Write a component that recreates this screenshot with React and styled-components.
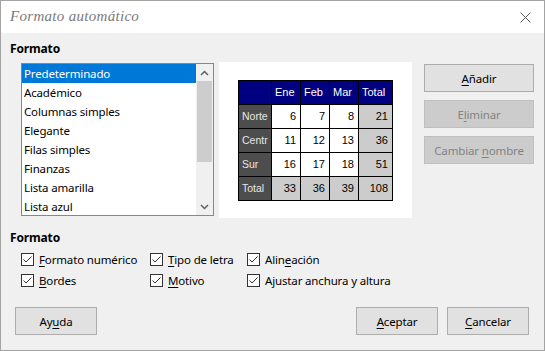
import React from "react";
import styled, { createGlobalStyle } from "styled-components";

const Global = createGlobalStyle`
  html, body { margin: 0; padding: 0; background: #f0f0f0; }
  body { font-family: "Noto Sans", "Liberation Sans", sans-serif; font-size: 11.5px; letter-spacing: -0.15px; color: #000; }
  * { box-sizing: border-box; }
`;

const Window = styled.div`
  width: 545px;
  height: 351px;
  border: 1px solid #a3a3a3;
  background: #f0f0f0;
  display: flex;
  flex-direction: column;
  overflow: hidden;
`;

const TitleBar = styled.div`
  height: 32px;
  background: #ffffff;
  display: flex;
  align-items: center;
  justify-content: space-between;
  padding: 0 13px 0 9px;
  flex-shrink: 0;
`;

const Title = styled.div`
  font-family: "Liberation Serif", "DejaVu Serif", serif;
  font-style: italic;
  font-size: 15px;
  color: #7a7a7a;
  letter-spacing: 0.3px;
  margin-top: -2px;
`;

const Body = styled.div`
  flex: 1;
  display: flex;
  flex-direction: column;
  padding: 8px 10px 0 9px;
`;

const SectionLabel = styled.div`
  font-weight: 700;
  font-size: 12px;
  line-height: 16px;
`;

const TopRow = styled.div`
  display: flex;
  align-items: flex-start;
  margin-top: 5px;
  padding-left: 11px;
`;

const ListBox = styled.div`
  width: 193px;
  height: 153px;
  margin-top: 1px;
  border: 1px solid #828790;
  background: #fff;
  display: flex;
  overflow: hidden;
`;

const Items = styled.div`
  flex: 1;
  overflow: hidden;
`;

const Item = styled.div`
  height: 19px;
  line-height: 19px;
  padding-left: 2px;
  white-space: nowrap;
  background: ${(p) => (p.$selected ? "#0078d7" : "transparent")};
  color: ${(p) => (p.$selected ? "#fff" : "#000")};
`;

const ScrollBar = styled.div`
  width: 17px;
  background: #f0f0f0;
  display: flex;
  flex-direction: column;
  align-items: center;
`;

const Arrow = styled.div`
  height: 17px;
  width: 17px;
  display: flex;
  align-items: center;
  justify-content: center;
`;

const Thumb = styled.div`
  width: 15px;
  height: 81px;
  background: #cdcdcd;
`;

const Track = styled.div`
  flex: 1;
`;

const Preview = styled.div`
  width: 193px;
  height: 156px;
  margin-left: 5px;
  background: #fff;
  display: flex;
  align-items: center;
  justify-content: center;
`;

const Grid = styled.div`
  display: grid;
  grid-template-columns: 32px 28px 28px 28px 33px;
  grid-auto-rows: 23px;
  gap: 1px;
  padding: 1px;
  background: #000;
  font-family: "Liberation Sans", Arial, sans-serif;
  font-size: 11px;
  letter-spacing: 0;
`;

const Cell = styled.div`
  display: flex;
  align-items: center;
  justify-content: ${(p) => (p.$right ? "flex-end" : "flex-start")};
  padding: 0 ${(p) => (p.$right ? "4px" : "0")} 0 3px;
  overflow: hidden;
  white-space: nowrap;
  background: ${(p) =>
    p.$kind === "head" ? "#000080" : p.$kind === "row" ? "#4d4d4d" : p.$kind === "sum" ? "#cccccc" : "#ffffff"};
  color: ${(p) => (p.$kind === "head" ? "#ffffff" : p.$kind === "row" ? "#e6e6e6" : "#000")};
  font-size: ${(p) => (p.$kind === "row" ? "10.5px" : "11px")};
`;

const ButtonCol = styled.div`
  display: flex;
  flex-direction: column;
  gap: 8px;
  margin-left: 12px;
  margin-top: 2px;
`;

const Button = styled.div`
  width: ${(p) => p.$w || 110}px;
  height: 28px;
  display: flex;
  align-items: center;
  justify-content: center;
  background: ${(p) => (p.$disabled ? "#cccccc" : "#e1e1e1")};
  border: 1px solid ${(p) => (p.$disabled ? "#bfbfbf" : "#adadad")};
  color: ${(p) => (p.$disabled ? "#838383" : "#000")};
  white-space: nowrap;
`;

const U = styled.span`
  text-decoration: underline;
  text-underline-offset: 2px;
`;

const Section2 = styled.div`
  margin-top: 12px;
`;

const Checks = styled.div`
  display: grid;
  grid-template-columns: 129px 97px auto;
  grid-auto-rows: 21px;
  padding-left: 11px;
  margin-top: 3px;
`;

const CheckItem = styled.label`
  display: flex;
  align-items: center;
  gap: 5px;
  white-space: nowrap;
`;

const Box = styled.span`
  width: 13px;
  height: 13px;
  border: 1px solid #333;
  background: #fff;
  display: flex;
  align-items: center;
  justify-content: center;
  flex-shrink: 0;
`;

const Footer = styled.div`
  display: flex;
  align-items: center;
  margin-top: auto;
  margin-bottom: 15px;
  margin-right: 5px;
  padding-left: 5px;
  gap: 9px;
`;

const Spacer = styled.div`
  flex: 1;
`;

const Check = ({ children }) => (
  <CheckItem>
    <Box>
      <svg width="11" height="11" viewBox="0 0 11 11">
        <path d="M1.5 5.5 L4 8 L9.5 2.5" fill="none" stroke="#333" strokeWidth="1" />
      </svg>
    </Box>
    <span>{children}</span>
  </CheckItem>
);

const items = [
  "Predeterminado",
  "Académico",
  "Columnas simples",
  "Elegante",
  "Filas simples",
  "Finanzas",
  "Lista amarilla",
  "Lista azul",
];

const table = [
  [["", "head"], ["Ene", "head"], ["Feb", "head"], ["Mar", "head"], ["Total", "head"]],
  [["Norte", "row"], ["6"], ["7"], ["8"], ["21", "sum"]],
  [["Centr", "row"], ["11"], ["12"], ["13"], ["36", "sum"]],
  [["Sur", "row"], ["16"], ["17"], ["18"], ["51", "sum"]],
  [["Total", "row"], ["33", "sum"], ["36", "sum"], ["39", "sum"], ["108", "sum"]],
];

export default function App() {
  return (
    <>
      <Global />
      <Window>
        <TitleBar>
          <Title>Formato automático</Title>
          <svg width="11" height="11" viewBox="0 0 11 11">
            <path d="M0.5 0.5 L10.5 10.5 M10.5 0.5 L0.5 10.5" stroke="#555" strokeWidth="1" />
          </svg>
        </TitleBar>
        <Body>
          <SectionLabel>Formato</SectionLabel>
          <TopRow>
            <ListBox>
              <Items>
                {items.map((t, i) => (
                  <Item key={t} $selected={i === 0}>
                    {t}
                  </Item>
                ))}
              </Items>
              <ScrollBar>
                <Arrow>
                  <svg width="9" height="6" viewBox="0 0 9 6">
                    <path d="M1 5 L4.5 1.5 L8 5" fill="none" stroke="#606060" strokeWidth="1.5" />
                  </svg>
                </Arrow>
                <Thumb />
                <Track />
                <Arrow>
                  <svg width="9" height="6" viewBox="0 0 9 6">
                    <path d="M1 1 L4.5 4.5 L8 1" fill="none" stroke="#606060" strokeWidth="1.5" />
                  </svg>
                </Arrow>
              </ScrollBar>
            </ListBox>
            <Preview>
              <Grid>
                {table.flatMap((row, r) =>
                  row.map(([txt, kind], c) => (
                    <Cell key={`${r}-${c}`} $kind={kind} $right={r > 0 && c > 0}>
                      {txt}
                    </Cell>
                  ))
                )}
              </Grid>
            </Preview>
            <ButtonCol>
              <Button>
                <U>A</U>ñadir
              </Button>
              <Button $disabled>
                E<U>l</U>iminar
              </Button>
              <Button $disabled>
                Cambiar&nbsp;<U>n</U>ombre
              </Button>
            </ButtonCol>
          </TopRow>
          <Section2>
            <SectionLabel>Formato</SectionLabel>
            <Checks>
              <Check>
                <U>F</U>ormato numérico
              </Check>
              <Check>
                <U>T</U>ipo de letra
              </Check>
              <Check>
                Alin<U>e</U>ación
              </Check>
              <Check>
                <U>B</U>ordes
              </Check>
              <Check>
                <U>M</U>otivo
              </Check>
              <Check>Ajustar anchura y altura</Check>
            </Checks>
          </Section2>
          <Footer>
            <Button $w={82}>
              Ay<U>u</U>da
            </Button>
            <Spacer />
            <Button $w={82}>
              <U>A</U>ceptar
            </Button>
            <Button $w={82}>
              <U>C</U>ancelar
            </Button>
          </Footer>
        </Body>
      </Window>
    </>
  );
}
